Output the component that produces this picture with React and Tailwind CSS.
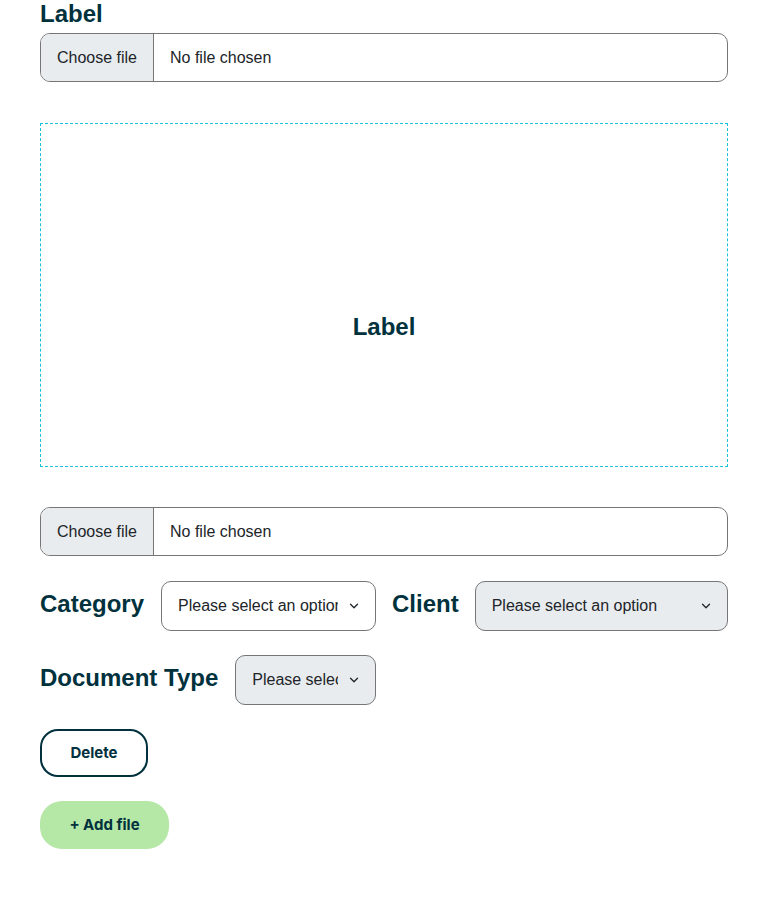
import { ChevronDown } from 'lucide-react'

function FileInput() {
  return (
    <div className="flex h-[49px] w-full overflow-hidden rounded-[10px] border border-[#767676] bg-white text-[16px] text-[#212529]">
      <div className="flex w-[113px] shrink-0 items-center justify-center border-r border-[#767676] bg-[#e9ecef]">
        Choose file
      </div>
      <div className="flex items-center pl-4">No file chosen</div>
    </div>
  )
}

function Select({ gray }) {
  return (
    <div
      className={
        'flex h-[50px] min-w-0 flex-1 items-center rounded-[10px] border border-[#767676] pl-4 pr-[14px] text-[16px] text-[#212529] ' +
        (gray ? 'bg-[#e9ecef]' : 'bg-white')
      }
    >
      <span className="min-w-0 flex-1 overflow-hidden whitespace-nowrap">Please select an option</span>
      <ChevronDown className="ml-[9px] shrink-0" size={14} strokeWidth={2.25} />
    </div>
  )
}

export default function App() {
  return (
    <div className="min-h-screen bg-white font-['Liberation_Sans',Arial,sans-serif] text-[#00313d]">
      <div className="mx-10 pb-16">
        <div className="text-[24px] font-bold leading-[28px]">Label</div>
        <div className="mt-[5px]">
          <FileInput />
        </div>

        <div className="mt-[41px] flex h-[344px] items-start justify-center border border-dashed border-[#17c1dc] pt-[189px]">
          <span className="text-[24px] font-bold leading-[28px]">Label</span>
        </div>

        <div className="mt-[40px]">
          <FileInput />
        </div>

        <div className="mt-[25px] grid grid-cols-2 gap-x-4 gap-y-[24px]">
          <div className="flex items-center gap-[17px]">
            <span className="whitespace-nowrap text-[24px] font-bold leading-[28px] -mt-[5px]">Category</span>
            <Select />
          </div>
          <div className="flex items-center gap-4">
            <span className="whitespace-nowrap text-[24px] font-bold leading-[28px] -mt-[5px]">Client</span>
            <Select gray />
          </div>
          <div className="flex items-center gap-[17px]">
            <span className="whitespace-nowrap text-[24px] font-bold leading-[28px] -mt-[5px]">Document Type</span>
            <Select gray />
          </div>
        </div>

        <div className="mt-[24px] flex flex-col items-start gap-[24px] font-['Inter',sans-serif]">
          <button className="h-[48px] w-[108px] rounded-[18px] border-2 border-[#00313d] bg-white text-[15px] font-bold">
            Delete
          </button>
          <button className="h-[48px] w-[129px] rounded-[22px] bg-[#b5e7a6] text-[15px] font-bold">
            + Add file
          </button>
        </div>
      </div>
    </div>
  )
}
